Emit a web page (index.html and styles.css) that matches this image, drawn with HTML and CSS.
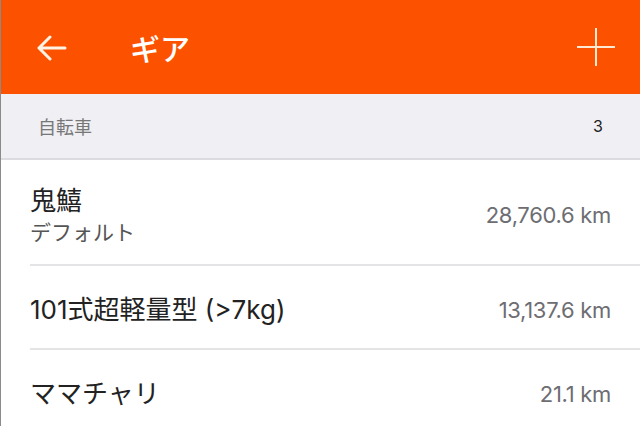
FILE: index.html
```html
<!DOCTYPE html>
<html lang="ja">
<head>
  <meta charset="UTF-8">
  <title>ギア</title>
  <link rel="stylesheet" href="styles.css">
</head>
<body>
  <div class="app">
    <header class="topbar">
      <svg class="icon back" width="30" height="26" viewBox="0 0 30 26">
        <path d="M28 13H3M13 2L2 13l11 11" fill="none" stroke="#fff3e6" stroke-width="3" stroke-linecap="round" stroke-linejoin="round"/>
      </svg>
      <h1 class="title">ギア</h1>
      <svg class="icon add" width="40" height="40" viewBox="0 0 40 40">
        <path d="M20 1v38M1 20h38" fill="none" stroke="#ffe9d2" stroke-width="2"/>
      </svg>
    </header>

    <div class="section">
      <span class="section-name">自転車</span>
      <span class="section-count">3</span>
    </div>

    <ul class="gear-list">
      <li class="gear tall">
        <div class="gear-text">
          <div class="gear-name">鬼鱚</div>
          <div class="gear-sub">デフォルト</div>
        </div>
        <div class="gear-dist">28,760.6 km</div>
      </li>
      <li class="gear">
        <div class="gear-text">
          <div class="gear-name">101式超軽量型 (&gt;7kg)</div>
        </div>
        <div class="gear-dist">13,137.6 km</div>
      </li>
      <li class="gear">
        <div class="gear-text">
          <div class="gear-name">ママチャリ</div>
        </div>
        <div class="gear-dist">21.1 km</div>
      </li>
    </ul>
  </div>
</body>
</html>
```

FILE: styles.css
```css
body {
  margin: 0;
  background: #fff;
  font-family: Inter, "Noto Sans CJK JP", sans-serif;
  overflow: hidden;
}

.app {
  width: 640px;
  height: 426px;
  border-left: 1px solid #8a8a8a;
  box-sizing: border-box;
}

.topbar {
  height: 94px;
  background: #fc5200;
  display: flex;
  align-items: center;
  padding: 0 24px 0 36px;
}

.back {
  margin-top: 2px;
}

.title {
  margin: 0 0 0 63px;
  flex: 1;
  color: #fff;
  font-family: "Noto Sans CJK JP", sans-serif;
  font-size: 30px;
  font-weight: 500;
}

.section {
  height: 64px;
  background: #efeff4;
  border-bottom: 2px solid #dcdce0;
  display: flex;
  align-items: center;
  justify-content: space-between;
  padding: 0 37px;
}

.section-name {
  font-family: "Noto Sans CJK JP", sans-serif;
  font-size: 18px;
  color: #777;
}

.section-count {
  font-size: 16px;
  color: #222;
}

.gear-list {
  list-style: none;
  margin: 0;
  padding: 0 0 0 29px;
}

.gear {
  display: flex;
  align-items: center;
  justify-content: space-between;
  box-sizing: border-box;
  height: 84px;
  padding: 6px 29px 0 0;
  border-bottom: 2px solid #e4e4e6;
}

.gear.tall {
  height: 106px;
}

.gear-name {
  font-size: 26px;
  color: #222;
  line-height: 32px;
}

.gear-sub {
  font-family: "Noto Sans CJK JP", sans-serif;
  font-size: 21px;
  color: #555;
  line-height: 28px;
}

.gear-dist {
  font-size: 22px;
  color: #6d6d72;
  letter-spacing: -0.3px;
}
```
